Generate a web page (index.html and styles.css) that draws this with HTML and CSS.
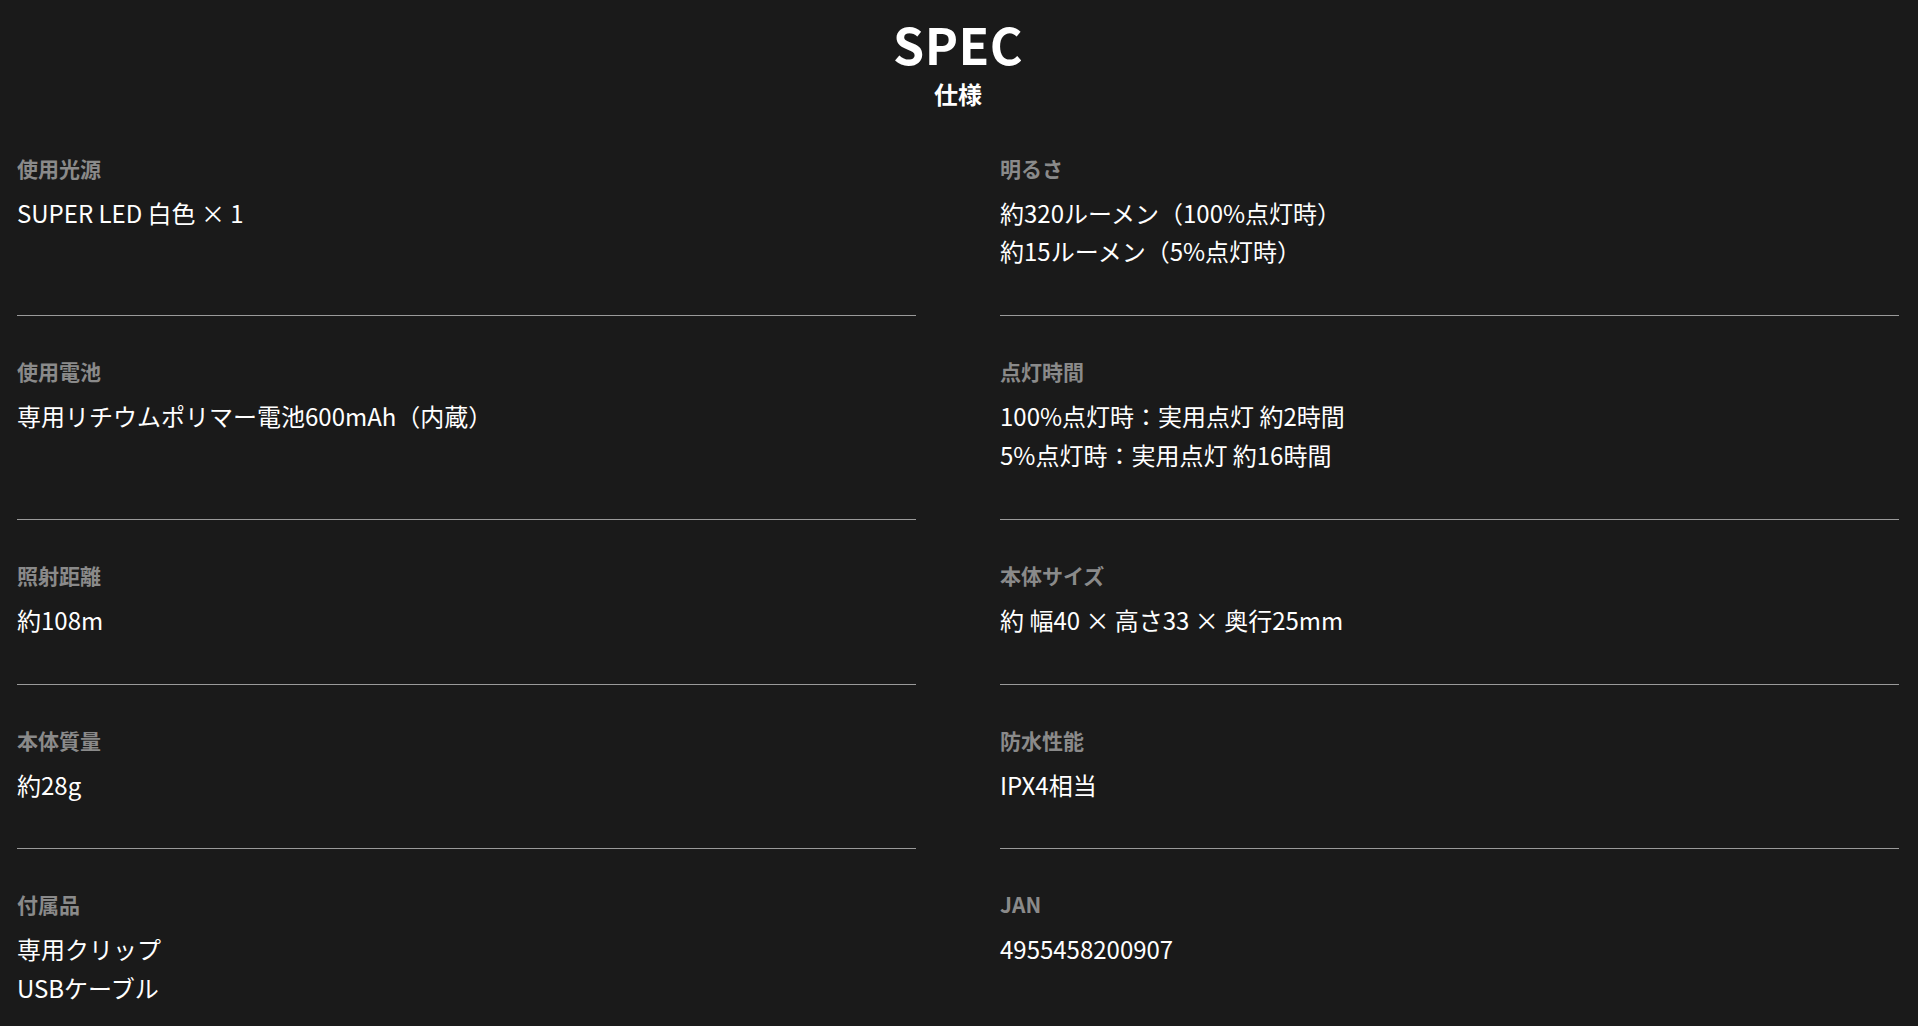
FILE: index.html
```html
<!DOCTYPE html>
<html lang="ja">
<head>
<meta charset="utf-8">
<title>SPEC</title>
<link rel="stylesheet" href="styles.css">
</head>
<body>
<section class="spec">
  <header class="spec-head">
    <h2 class="spec-title">SPEC</h2>
    <p class="spec-sub">仕様</p>
  </header>
  <dl class="spec-grid">
    <div class="spec-item"><dt>使用光源</dt><dd>SUPER LED 白色 × 1</dd></div>
    <div class="spec-item"><dt>明るさ</dt><dd>約320ルーメン（100%点灯時）<br>約15ルーメン（5%点灯時）</dd></div>
    <div class="spec-item"><dt>使用電池</dt><dd>専用リチウムポリマー電池600mAh（内蔵）</dd></div>
    <div class="spec-item"><dt>点灯時間</dt><dd>100%点灯時：実用点灯 約2時間<br>5%点灯時：実用点灯 約16時間</dd></div>
    <div class="spec-item"><dt>照射距離</dt><dd>約108m</dd></div>
    <div class="spec-item"><dt>本体サイズ</dt><dd>約 幅40 × 高さ33 × 奥行25mm</dd></div>
    <div class="spec-item"><dt>本体質量</dt><dd>約28g</dd></div>
    <div class="spec-item"><dt>防水性能</dt><dd>IPX4相当</dd></div>
    <div class="spec-item"><dt>付属品</dt><dd>専用クリップ<br>USBケーブル</dd></div>
    <div class="spec-item"><dt>JAN</dt><dd>4955458200907</dd></div>
  </dl>
</section>
</body>
</html>
```
FILE: styles.css
```css
html, body {
  margin: 0;
  padding: 0;
  background: #1a1a1a;
}
body {
  font-family: "Noto Sans CJK JP", "Noto Sans", sans-serif;
  color: #ffffff;
}
.spec {
  padding: 14px 19px 0 17px;
}
.spec-head {
  text-align: center;
  margin-bottom: 1px;
}
.spec-title {
  margin: 0;
  font-size: 50px;
  line-height: 58px;
  font-weight: 700;
  letter-spacing: 0.01em;
}
.spec-sub {
  margin: 4px 0 0;
  font-size: 24px;
  line-height: 36px;
  font-weight: 700;
}
.spec-grid {
  margin: 0;
  display: grid;
  grid-template-columns: 1fr 1fr;
  column-gap: 84px;
}
.spec-item {
  padding: 38px 0 44.5px;
  border-bottom: 1px solid #9a9a9a;
}
.spec-item dt {
  font-size: 21px;
  line-height: 35px;
  font-weight: 700;
  color: #8a8a8a;
  margin: 0 0 8px;
}
.spec-item dd {
  margin: 0;
  font-size: 24px;
  line-height: 38.4px;
  font-weight: 400;
  color: #ffffff;
}
```
